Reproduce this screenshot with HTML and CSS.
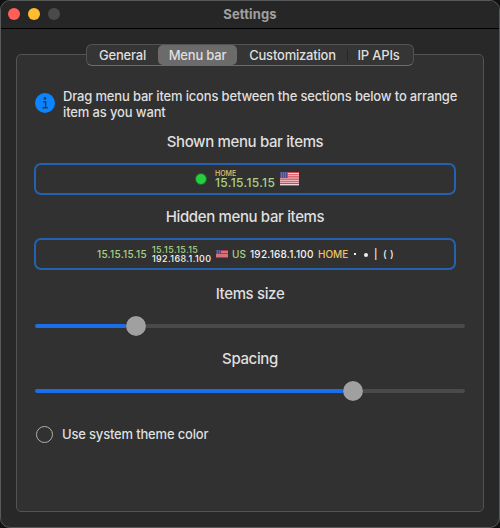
FILE: index.html
```
<!DOCTYPE html>
<html lang="en">
<head>
<meta charset="utf-8">
<title>Settings</title>
<link rel="stylesheet" href="styles.css">
</head>
<body>
<main class="window">
  <header class="titlebar">
    <div class="lights"><i class="light close"></i><i class="light minimize"></i><i class="light disabled"></i></div>
    <h1>Settings</h1>
  </header>
  <div class="body">
    <nav class="tabs">
      <span class="tab general">General</span>
      <span class="tab menubar active">Menu bar</span>
      <span class="tab custom">Customization</span>
      <span class="tab apis">IP APIs</span>
    </nav>
    <section class="panel">
      <div class="info">
        <svg width="20" height="20" viewBox="0 0 20 20"><circle cx="10" cy="10" r="10" fill="#0a84ff"/><circle cx="9.9" cy="5.4" r="1.3" fill="#263b52"/><path d="M8 8.7h2.6v5.8M7.4 14.7h5.4" fill="none" stroke="#263b52" stroke-width="1.4"/></svg>
        <p><span class="line1">Drag menu bar item icons between the sections below to arrange</span><br><span class="line2">item as you want</span></p>
      </div>
      <h2 class="h-shown">Shown menu bar items</h2>
      <div class="box shown">
        <i class="status"></i>
        <div class="stack big"><span class="yellow">HOME</span><span class="green">15.15.15.15</span></div>
        <svg class="flag" width="19" height="14" viewBox="0 0 19 14"><rect width="19" height="14" fill="#f0d5d8"/><path d="M0 .5h19M0 2.7h19M0 4.9h19M0 7.1h19M0 9.3h19M0 11.4h19M0 13.5h19" stroke="#cf4654" stroke-width="1.1"/><rect width="8" height="6" fill="#4e4c86"/><path d="M1 1h7M1 3h7M1 5h7" stroke="#a3a2c5" stroke-width=".8" stroke-dasharray="1 1"/></svg>
      </div>
      <h2 class="h-hidden">Hidden menu bar items</h2>
      <div class="box hidden-items">
        <span class="green ip">15.15.15.15</span>
        <div class="stack small"><span class="green">15.15.15.15</span><span class="white">192.168.1.100</span></div>
        <svg class="flag-small" width="12" height="8" viewBox="0 0 12 8"><rect width="12" height="8" fill="#d9707a"/><path d="M0 .5h12M0 3.5h12M0 7.5h12" stroke="#bd3545"/><rect width="5" height="4" fill="#4b4b82"/><path d="M1 1h3M1 3h3" stroke="#9998bd" stroke-width=".7" stroke-dasharray="1 1"/></svg>
        <span class="green us">US</span>
        <span class="white local">192.168.1.100</span>
        <span class="yellow home">HOME</span>
        <i class="dot square"></i><i class="dot round"></i>
        <span class="bar">|</span><span class="paren">(</span><span class="paren last">)</span>
      </div>
      <h2 class="h-size">Items size</h2>
      <div class="slider size"><i class="fill"></i><i class="knob"></i><i class="rest"></i></div>
      <h2 class="h-spacing">Spacing</h2>
      <div class="slider spacing"><i class="fill"></i><i class="knob"></i><i class="rest"></i></div>
      <div class="option"><i class="radio"></i><span>Use system theme color</span></div>
    </section>
  </div>
</main>
</body>
</html>
```
FILE: styles.css
```
* { box-sizing: border-box; }
body { margin: 0; background: #111; font: 500 13px/16px Inter, "Liberation Sans", sans-serif; color: #dfdfdf; overflow: hidden; }
h1, h2, p { margin: 0; }
i { display: block; flex: none; }
svg { display: block; flex: none; }
span { white-space: nowrap; }
.window { width: 500px; height: 528px; border: 1px solid #575a5a; border-radius: 10px; background: #282828; overflow: hidden; }
.titlebar { height: 28px; border-bottom: 1px solid #000; background: #262626; display: grid; grid-template-columns: 100px 1fr 100px; align-items: center; padding-bottom: 1px; }
.lights { display: flex; gap: 8px; padding-left: 7px; }
.light { width: 12px; height: 12px; border-radius: 50%; }
.close { background: #ff5f57; }
.minimize { background: #febc2e; }
.disabled { background: #4a4a4a; }
h1 { font-size: 13px; font-weight: 700; color: #a0a0a0; text-align: center; letter-spacing: .12px; }
.body { padding: 15px 15px 0; display: flex; flex-direction: column; }
.tabs { align-self: center; z-index: 1; width: 328px; height: 22px; border: 1px solid #535353; border-bottom-color: #6c6c6c; border-radius: 6px; background: #353535; display: flex; letter-spacing: -.2px; }
.tab { height: 20px; display: flex; align-items: center; justify-content: center; }
.general { width: 71px; }
.menubar { width: 79px; }
.custom { width: 111px; background: linear-gradient(#262626, #262626) right center / 1px 12px no-repeat; }
.apis { width: 61px; }
.active { background: #6b6b6b; border-radius: 5px; }
.panel { height: 458px; margin-top: -12px; padding: 33px 18px 0; border: 1px solid #535353; border-radius: 5px; background: #313131; }
.info { display: flex; align-items: center; gap: 8px; height: 32px; }
.info svg { margin-top: -2px; }
.line1 { letter-spacing: -.165px; }
.line2 { letter-spacing: -.14px; }
h2 { font-size: 15px; line-height: 20px; height: 20px; font-weight: 500; text-align: center; white-space: nowrap; letter-spacing: -.36px; }
.h-shown { margin: 12px 10px 11px 0; }
.h-hidden { margin: 12px 10px 11px 0; }
.h-size { margin: 14px 0 12px; }
.h-spacing { margin: 13px 0 12px; }
.box { width: 422px; height: 32px; margin-left: -1px; border: 2px solid #2461b0; border-radius: 7px; display: flex; align-items: center; line-height: 10px; }
.green { color: #a9d188; }
.yellow { color: #edc26b; }
.white { color: #f4f4f4; }
.shown { padding-left: 159px; }
.status { width: 12px; height: 12px; border-radius: 50%; background: #28cd41; border: 1px solid #176c26; }
.stack { display: flex; flex-direction: column; }
.big { width: 60px; margin: -1px 5px 0 8px; }
.big .yellow { font-size: 7px; line-height: 7px; }
.big .green { font-size: 12px; line-height: 11px; letter-spacing: .34px; }
.hidden-items { padding-left: 61px; font-size: 10px; }
.ip { width: 55px; letter-spacing: .27px; }
.small { width: 64px; font-size: 9px; line-height: 9px; letter-spacing: .36px; }
.us { width: 18px; margin-left: 4px; }
.local { width: 68px; letter-spacing: .22px; }
.home { width: 36px; }
.dot { background: #f0f0f0; }
.square { width: 2px; height: 2px; }
.round { width: 4px; height: 4px; border-radius: 50%; margin: 2px 7px 0 8px; }
.bar { width: 9px; margin-left: -1px; color: #eee; }
.paren { width: 7px; color: #eee; }
.slider { height: 20px; display: flex; align-items: center; }
.fill { height: 4px; background: #1a6eea; border-radius: 2px 0 0 2px; }
.size .fill { width: 91px; }
.spacing .fill { width: 308px; }
.knob { width: 20px; height: 20px; border-radius: 50%; background: #a0a0a0; box-shadow: 0 0 1px #1b1b1b; }
.rest { flex: 1; height: 4px; background: #4a4a4a; border-radius: 0 2px 2px 0; }
.option { display: flex; align-items: center; gap: 9px; margin-top: 24px; height: 18px; padding-left: 1px; letter-spacing: -.18px; }
.radio { width: 17px; height: 17px; border: 1px solid #b0b0b0; border-radius: 50%; }
```
